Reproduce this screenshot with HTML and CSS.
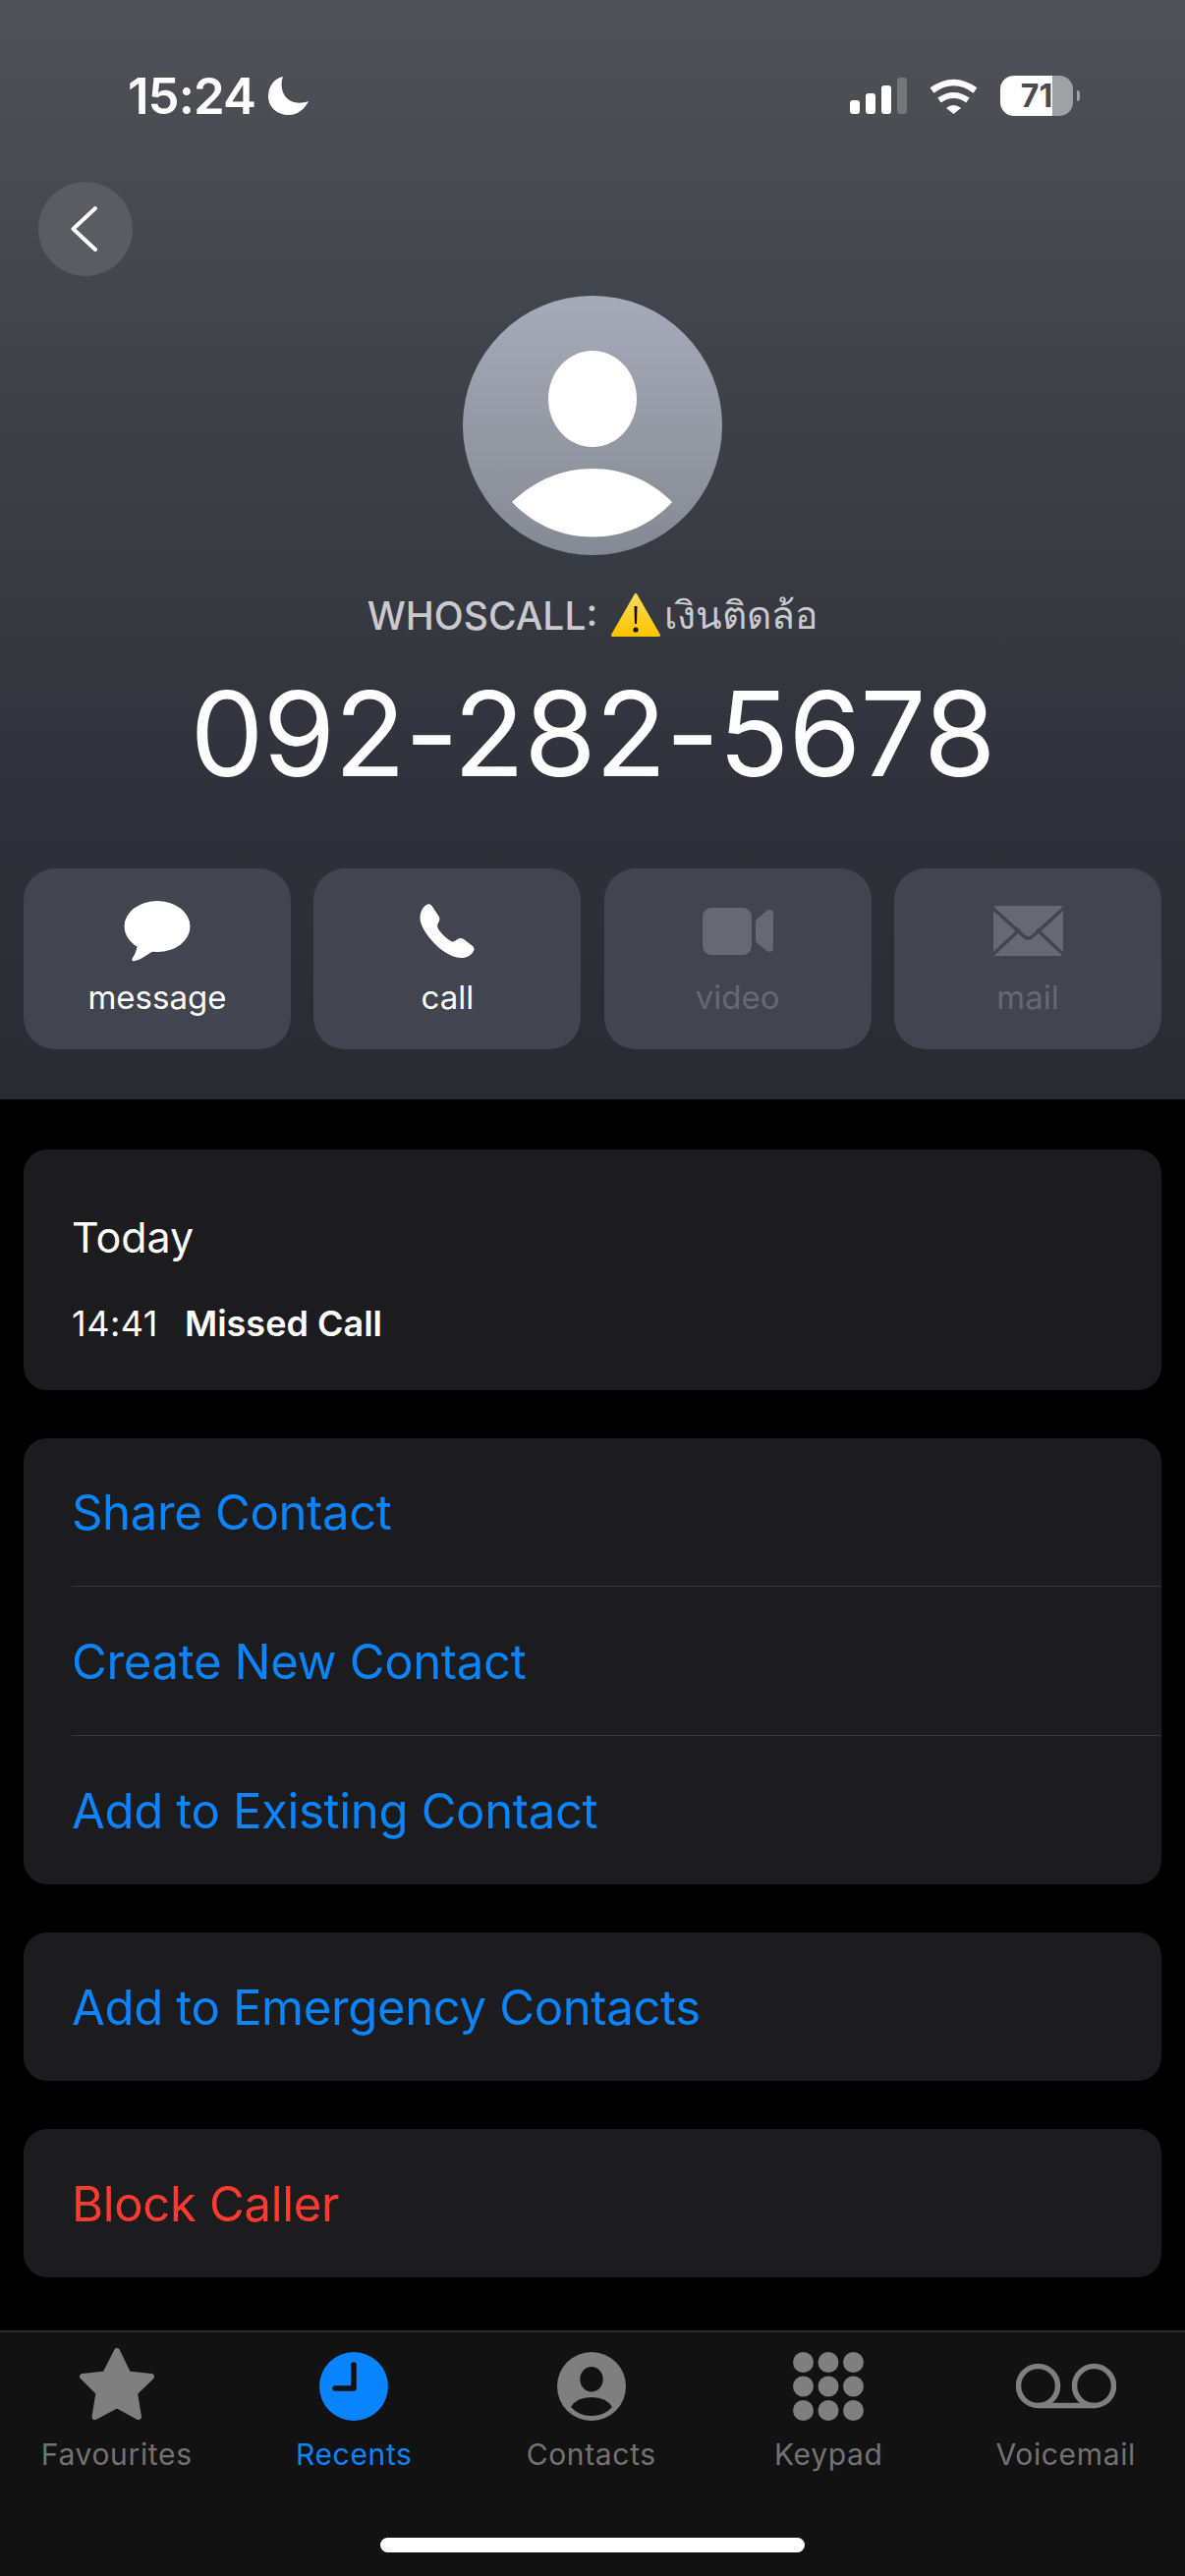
FILE: index.html
```html
<!DOCTYPE html>
<html lang="en">
<head>
    <meta charset="UTF-8">
    <meta name="viewport" content="width=device-width, initial-scale=1.0">
    <title>Recents</title>
    <link rel="stylesheet" href="styles.css">
</head>
<body>
    <div class="page">
        <header class="header">
            <div class="status">
                <div class="status-left">
                    <span class="clock">15:24</span>
                    <svg class="moon" viewBox="0 0 41 39"><path d="M15 0C5 2 0 11 0 20C0 31 9 39 21 39C30 39 37 33 41 25C30 29 19 26 15 16C13 10 13 5 15 0Z"/></svg>
                </div>
                <div class="status-right">
                    <div class="signal">
                        <i class="bar bar-1"></i><i class="bar bar-2"></i><i class="bar bar-3"></i><i class="bar bar-4"></i>
                    </div>
                    <svg class="wifi" viewBox="0 0 51 37">
                        <path class="wifi-arc" stroke-width="6.5" d="M3.5 13Q25.5 -3 47.5 13"/>
                        <path class="wifi-arc" stroke-width="6" d="M11 23Q25.5 13 40 23"/>
                        <path class="wifi-dot" d="M18 31Q25.5 25 33 31L25.5 37Z"/>
                    </svg>
                    <div class="battery"><div class="battery-body">71</div><i class="battery-cap"></i></div>
                </div>
            </div>

            <button class="back">
                <svg viewBox="0 0 27 46"><path d="M25 2L2.5 23L25 44"/></svg>
            </button>

            <div class="avatar">
                <svg viewBox="0 0 264 264">
                    <ellipse cx="132" cy="105" rx="45" ry="49" fill="#fff"/>
                    <path d="M50 210C72 189 100 176 132 176C164 176 192 189 213 210C192 233 164 245.500 132 245.500C100 245.500 72 233 50 210Z" fill="#fff"/>
                </svg>
            </div>

            <div class="caller-label">
                <span>WHOSCALL:</span>
                <svg class="warn" viewBox="0 0 50 44">
                    <defs>
                        <linearGradient id="warn-fill" x1="0" y1="0" x2="0" y2="1">
                            <stop offset="0" stop-color="#f6dc5a"/>
                            <stop offset="1" stop-color="#ffc400"/>
                        </linearGradient>
                    </defs>
                    <path d="M25 1.500L48.500 42.500H1.500Z" fill="url(#warn-fill)" stroke="url(#warn-fill)" stroke-width="3" stroke-linejoin="round"/>
                    <path d="M23.500 13H26.500L26 31H24Z" fill="#111"/>
                    <circle cx="25" cy="37" r="2.600" fill="#111"/>
                </svg>
                <span>เงินติดล้อ</span>
            </div>

            <div class="number">092-282-5678</div>

            <div class="actions">
                <div class="action">
                    <svg class="icon-message" viewBox="0 0 68 62"><ellipse cx="34" cy="26" rx="33.500" ry="26"/><path d="M14 44C13 52 10 56 8.500 59C8 61 9 61.500 11 61C17 60 22 56 30 51Z"/></svg>
                    <span>message</span>
                </div>
                <div class="action">
                    <svg class="icon-call" viewBox="0 0 56 55"><path d="M7 1C9 -0.500 11 0 12.500 2L19.500 12.500C21 15 20.500 17 19 19.500C17.500 22 18 24 20 27C24 32 27 35 32 38C34 39 36 38 38 36.500C40.500 34.500 42.500 34.500 45 36L54 43C56 45 56 47 54 49.500C51 53.500 47 55 42 55C32 54.500 21 47 13 38C5 29 0 20 0.500 13C1 8 3 3.500 7 1Z"/></svg>
                    <span>call</span>
                </div>
                <div class="action action-off">
                    <svg class="icon-video" viewBox="0 0 72 48"><rect width="50" height="48" rx="9"/><path d="M54 14C54 13 54.500 12.200 55.200 11.500L65.500 3C68 1 72 2 72 6V41C72 45 68 46 65.500 44L55.200 35.500C54.500 34.800 54 34 54 33Z"/></svg>
                    <span>video</span>
                </div>
                <div class="action action-off">
                    <svg class="icon-mail" viewBox="0 0 71 51">
                        <rect width="71" height="51" rx="2"/>
                        <path class="flap" d="M-1 2L31 31Q35.500 35 40 31L72 2M-1 50L27 24M72 50L44 24"/>
                    </svg>
                    <span>mail</span>
                </div>
            </div>
        </header>

        <main class="content">
            <section class="card today">
                <div class="today-title">Today</div>
                <div class="today-line"><span class="today-time">14:41</span><span class="today-kind">Missed Call</span></div>
            </section>

            <section class="card">
                <div class="row">Share Contact</div>
                <div class="row">Create New Contact</div>
                <div class="row">Add to Existing Contact</div>
            </section>

            <section class="card">
                <div class="row">Add to Emergency Contacts</div>
            </section>

            <section class="card">
                <div class="row row-danger">Block Caller</div>
            </section>
        </main>

        <nav class="tabbar">
            <div class="tabs">
                <div class="tab">
                    <svg class="tab-icon star-icon" width="76" height="73" viewBox="0 0 76 73"><path class="star" d="M38 3L49.500 26.500L73 29L56 45.500L60 70L38 58L15.500 70L19.500 45.500L3 29L26 26.500Z"/></svg>
                    <span>Favourites</span>
                </div>
                <div class="tab tab-active">
                    <svg class="tab-icon" width="70" height="70" viewBox="0 0 70 70">
                        <circle cx="35" cy="35" r="35" fill="#0a84ff"/>
                        <path class="clock-hands" d="M35 13V37H16"/>
                    </svg>
                    <span>Recents</span>
                </div>
                <div class="tab">
                    <svg class="tab-icon" width="70" height="70" viewBox="0 0 70 70">
                        <circle cx="35" cy="35" r="35" fill="#7f7f7f"/>
                        <ellipse cx="35" cy="27.700" rx="11.700" ry="12.700" fill="#121212"/>
                        <path d="M14 56Q20 46 35 46Q50 46 56 56Q48 65 35 65Q22 65 14 56Z" fill="#121212"/>
                    </svg>
                    <span>Contacts</span>
                </div>
                <div class="tab">
                    <svg class="tab-icon" width="72" height="70" viewBox="0 0 72 70" fill="#7f7f7f">
                        <circle cx="10.500" cy="10.500" r="10.500"/><circle cx="36" cy="10.500" r="10.500"/><circle cx="61.500" cy="10.500" r="10.500"/>
                        <circle cx="10.500" cy="35" r="10.500"/><circle cx="36" cy="35" r="10.500"/><circle cx="61.500" cy="35" r="10.500"/>
                        <circle cx="10.500" cy="59.500" r="10.500"/><circle cx="36" cy="59.500" r="10.500"/><circle cx="61.500" cy="59.500" r="10.500"/>
                    </svg>
                    <span>Keypad</span>
                </div>
                <div class="tab">
                    <svg class="tab-icon" width="102" height="70" viewBox="0 0 102 70">
                        <g class="voicemail">
                            <circle cx="22.500" cy="34.500" r="20"/>
                            <circle cx="79.500" cy="34.500" r="20"/>
                            <path d="M22.500 54.500H79.500"/>
                        </g>
                    </svg>
                    <span>Voicemail</span>
                </div>
            </div>
            <div class="home-bar"></div>
        </nav>
    </div>
</body>
</html>
```

FILE: styles.css
```css
* {
    box-sizing: border-box;
}
body {
    margin: 0;
    background: #000;
    font-family: Inter, "Noto Sans", "DejaVu Sans", sans-serif;
    color: #fff;
}
.page {
    width: 1206px;
    height: 2622px;
    display: flex;
    flex-direction: column;
    overflow: hidden;
}

/* header */
.header {
    height: 1119px;
    padding-top: 77px;
    background: linear-gradient(180deg, #515257 0%, #43454d 27%, #30323b 72%, #292a32 100%);
}
.status {
    height: 41px;
    padding: 0 107px 0 130px;
    display: flex;
    justify-content: space-between;
    align-items: center;
}
.status-left {
    display: flex;
    align-items: center;
    gap: 13px;
}
.clock {
    font-size: 51px;
    font-weight: 600;
    letter-spacing: -1px;
    line-height: 41px;
}
.moon {
    width: 41px;
    height: 39px;
    fill: #fff;
}
.status-right {
    display: flex;
    align-items: center;
}
.signal {
    display: flex;
    align-items: flex-end;
    gap: 6px;
    height: 37px;
    margin-right: 22px;
}
.bar {
    width: 10px;
    background: #fff;
    border-radius: 3px;
}
.bar-1 { height: 14px; }
.bar-2 { height: 21px; }
.bar-3 { height: 29px; }
.bar-4 { height: 37px; background: #757679; }
.wifi {
    width: 51px;
    height: 37px;
    margin-right: 22px;
}
.wifi-arc {
    fill: none;
    stroke: #fff;
}
.wifi-dot {
    fill: #fff;
}
.battery {
    display: flex;
    align-items: center;
    gap: 4px;
}
.battery-body {
    width: 74px;
    height: 41px;
    border-radius: 14px;
    background: linear-gradient(90deg, #fff 71%, #a0a1a5 71%);
    color: #4b4c52;
    font-size: 32px;
    font-weight: 700;
    line-height: 41px;
    text-align: center;
}
.battery-cap {
    width: 3px;
    height: 11px;
    background: #a0a1a5;
    border-radius: 0 3px 3px 0;
}
.back {
    display: flex;
    align-items: center;
    justify-content: center;
    width: 96px;
    height: 96px;
    margin: 67px 0 0 39px;
    padding: 0 4px 0 0;
    border: none;
    border-radius: 50%;
    background: #5a5c62;
}
.back svg {
    width: 27px;
    height: 46px;
}
.back path {
    fill: none;
    stroke: #fff;
    stroke-width: 4;
    stroke-linecap: round;
    stroke-linejoin: round;
}
.avatar {
    width: 264px;
    height: 264px;
    margin: 20px auto 0;
    border-radius: 50%;
    background: linear-gradient(180deg, #a7abb8 0%, #858993 100%);
}
.avatar svg {
    display: block;
    width: 264px;
    height: 264px;
}
.caller-label {
    display: flex;
    justify-content: center;
    align-items: center;
    gap: 4px;
    height: 50px;
    margin-top: 36px;
    color: #c9cacd;
    font-size: 39px;
    font-weight: 500;
}
.warn {
    width: 50px;
    height: 44px;
    margin-left: 10px;
}
.number {
    height: 140px;
    margin-top: 26px;
    font-size: 119px;
    line-height: 140px;
    text-align: center;
    letter-spacing: -1px;
}
.actions {
    display: flex;
    gap: 23.500px;
    margin-top: 67px;
    padding: 0 24px;
}
.action {
    position: relative;
    flex: 1;
    height: 184px;
    display: flex;
    flex-direction: column;
    align-items: center;
    border-radius: 32px;
    background: #42454f;
    font-size: 33px;
}
.action svg {
    fill: #fff;
}
.action span {
    position: absolute;
    top: 109px;
    line-height: 44px;
}
.action-off {
    color: #666872;
}
.action-off svg {
    fill: #666872;
}
.icon-message {
    width: 68px;
    height: 62px;
    margin-top: 33px;
}
.icon-call {
    width: 56px;
    height: 55px;
    margin-top: 36px;
}
.icon-video {
    width: 72px;
    height: 48px;
    margin-top: 40px;
}
.icon-mail {
    width: 71px;
    height: 51px;
    margin-top: 38px;
}
.flap {
    fill: none;
    stroke: #42454f;
    stroke-width: 3.500;
}

/* cards */
.content {
    flex: 1;
    padding: 51px 24px 0;
    display: flex;
    flex-direction: column;
    gap: 48.500px;
}
.card {
    border-radius: 24px;
    background: #1c1c1e;
    padding-left: 49px;
}
.today {
    height: 245px;
    padding-top: 62px;
}
.today-title {
    font-size: 43px;
    line-height: 54px;
}
.today-line {
    display: flex;
    gap: 27px;
    margin-top: 39px;
    font-size: 36px;
    line-height: 44px;
}
.today-time {
    letter-spacing: 0.500px;
}
.today-kind {
    font-weight: 600;
}
.row {
    height: 151.500px;
    display: flex;
    align-items: center;
    padding-top: 2px;
    font-size: 49px;
    letter-spacing: -0.330px;
    color: #0a84ff;
    border-bottom: 1.500px solid #38383a;
}
.row:last-child {
    border-bottom: none;
}
.row-danger {
    color: #ff3b30;
}

/* tab bar */
.tabbar {
    height: 250px;
    background: #121212;
    border-top: 2px solid #2c2c2c;
}
.tabs {
    display: grid;
    grid-template-columns: repeat(5, 241.500px);
    margin-left: -2px;
    height: 209px;
    padding-top: 16px;
}
.tab {
    position: relative;
    display: flex;
    flex-direction: column;
    align-items: center;
    font-size: 30px;
    letter-spacing: 0.650px;
    color: #727272;
}
.tab-active {
    color: #0a84ff;
}
.tab span {
    position: absolute;
    top: 88px;
    line-height: 40px;
}
.tab-icon {
    display: block;
    margin-top: 4px;
}
.star-icon {
    margin-top: 0;
}
.star {
    fill: #7f7f7f;
    stroke: #7f7f7f;
    stroke-width: 6;
    stroke-linejoin: round;
}
.clock-hands {
    fill: none;
    stroke: #121212;
    stroke-width: 5.500;
    stroke-linecap: round;
    stroke-linejoin: round;
}
.voicemail {
    fill: none;
    stroke: #7f7f7f;
    stroke-width: 5.500;
}
.home-bar {
    width: 432px;
    height: 15px;
    margin: 0 auto;
    border-radius: 8px;
    background: #fff;
}
```
